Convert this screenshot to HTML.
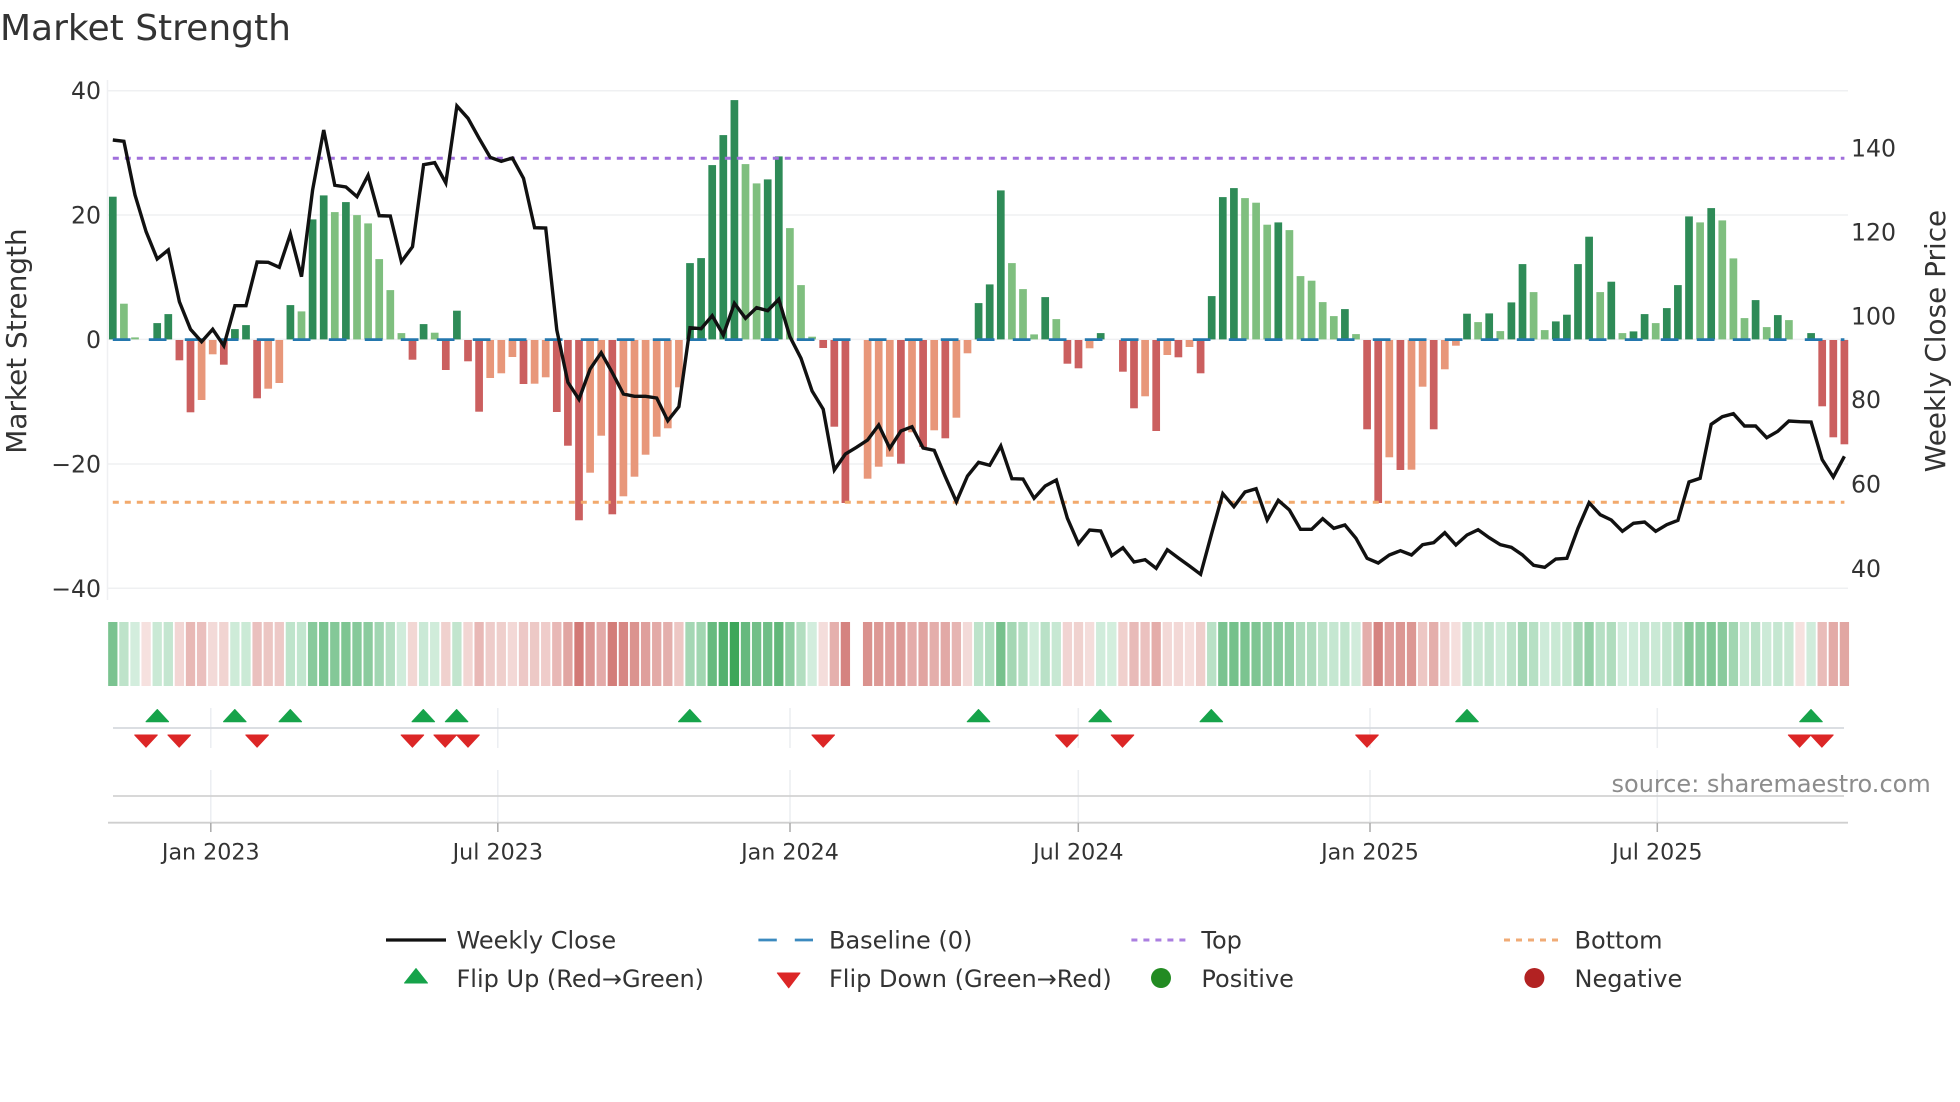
<!DOCTYPE html>
<html lang="en">
<head>
<meta charset="utf-8">
<title>Market Strength</title>
<style>
html,body{margin:0;padding:0;background:#fff;width:1960px;height:1102px;overflow:hidden}
svg{display:block}
text{font-family:"DejaVu Sans","Liberation Sans",sans-serif;fill:#333}
.t{font-size:22.2px}
.y{font-size:23.6px}
.l{font-size:24px}
</style>
</head>
<body>
<svg id="c" xmlns="http://www.w3.org/2000/svg" width="1960" height="1102" viewBox="0 0 1960 1102">
<rect width="1960" height="1102" fill="#fff"/>
<text x="0" y="40" font-size="36">Market Strength</text>

<!-- grid -->
<g stroke="#eff0f2" stroke-width="1.5" fill="none">
<path d="M107.5 80V600"/>
<path d="M108 90.7H1848M108 215H1848M108 339.4H1848M108 464H1848M108 588.3H1848"/>
</g>

<g id="bars"></g>
<path d="M112.8 339.6H1844.4" stroke="#2477ad" stroke-width="2.8" stroke-dasharray="17.7 18.3" fill="none"/>
<path d="M112.8 158.3H1844.4" stroke="#a06fdc" stroke-width="3" stroke-dasharray="6 6" fill="none"/>
<path d="M112.8 502.3H1844.4" stroke="#f2a96c" stroke-width="3" stroke-dasharray="6 6" fill="none"/>
<polyline id="price" fill="none" stroke="#111" stroke-width="3.4"/>

<!-- left axis -->
<g class="y" text-anchor="end">
<text x="101" y="99.2">40</text>
<text x="101" y="223.4">20</text>
<text x="101" y="347.9">0</text>
<text x="101" y="472.4">−20</text>
<text x="101" y="596.8">−40</text>
</g>
<!-- right axis -->
<g class="y">
<text x="1851" y="156.4">140</text>
<text x="1851" y="240.4">120</text>
<text x="1851" y="324.4">100</text>
<text x="1851" y="408.1">80</text>
<text x="1851" y="492.4">60</text>
<text x="1851" y="576.8">40</text>
</g>
<text transform="translate(26 341) rotate(-90)" text-anchor="middle" font-size="27.9">Market Strength</text>
<text transform="translate(1945 341) rotate(-90)" text-anchor="middle" font-size="27.9">Weekly Close Price</text>

<!-- heat strip -->
<g id="heat"></g>

<!-- event strip -->
<g stroke="#eceef1" stroke-width="1.5" fill="none">
<path d="M210.8 708V748M497.8 708V748M790 708V748M1078.3 708V748M1370 708V748M1657.3 708V748"/>
<path d="M210.8 770V822M497.8 770V822M790 770V822M1078.3 770V822M1370 770V822M1657.3 770V822"/>
</g>
<path d="M113 728H1844" stroke="#d6d9de" stroke-width="1.8" fill="none"/>
<path d="M113 796H1844" stroke="#d2d2d2" stroke-width="1.8" fill="none"/>
<path d="M108 822.7H1848" stroke="#cfcfcf" stroke-width="1.8" fill="none"/>
<path d="M210.8 823V832M497.8 823V832M790 823V832M1078.3 823V832M1370 823V832M1657.3 823V832" stroke="#aaa" stroke-width="1.5" fill="none"/>
<g id="mk"></g>

<g class="t" text-anchor="middle">
<text x="210.8" y="859.5">Jan 2023</text>
<text x="497.8" y="859.5">Jul 2023</text>
<text x="790" y="859.5">Jan 2024</text>
<text x="1078.3" y="859.5">Jul 2024</text>
<text x="1370" y="859.5">Jan 2025</text>
<text x="1657.3" y="859.5">Jul 2025</text>
</g>
<text x="1611.5" y="792" font-size="24" style="fill:#8c8c8c">source: sharemaestro.com</text>

<!-- legend -->
<path d="M386 940H446" stroke="#111" stroke-width="3.2" fill="none"/>
<path d="M758.4 940H776.8M794.8 940H813" stroke="#3c8abf" stroke-width="2.8" fill="none"/>
<path d="M1131.4 940H1186" stroke="#ab7fe0" stroke-width="3" stroke-dasharray="6 6" fill="none"/>
<path d="M1504 940H1558.5" stroke="#f0ab76" stroke-width="3" stroke-dasharray="6 6" fill="none"/>
<path d="M416 968.5L427.5 983H404.5Z" fill="#16a34a" stroke="#16a34a" stroke-width="1" stroke-linejoin="round"/>
<path d="M777.3 973H800L788.7 987.8Z" fill="#dc2626" stroke="#dc2626" stroke-width="1" stroke-linejoin="round"/>
<circle cx="1161" cy="978" r="10" fill="#228b22"/>
<circle cx="1534.4" cy="978" r="10" fill="#b22222"/>
<g class="l">
<text x="456.5" y="948.5">Weekly Close</text>
<text x="456.5" y="987">Flip Up (Red→Green)</text>
<text x="829" y="948.5">Baseline (0)</text>
<text x="829" y="987">Flip Down (Green→Red)</text>
<text x="1201.4" y="948.5">Top</text>
<text x="1201.4" y="987">Positive</text>
<text x="1574.5" y="948.5">Bottom</text>
<text x="1574.5" y="987">Negative</text>
</g>
</svg>
<script>
(function(){
var X0=112.8,P=11.1;
var b="142.7d 35.7l 2l -1l 16.3d 25.3d -20.3d -72.3d -60l -14.3l -24.7d 10.3d 14.3d -58.3d -48.7l -43l 34.3d 28l 120d 144d 127.3l 137.3d 124.3l 116l 80.3l 49.3l 6.3l -19.7d 15.3d 6.7l -30d 28.7d -21.3d -71.7d -38l -33.3l -17l -44d -43.7l -37.3l -72d -105.7d -180.3d -132.7l -95.7l -174.3d -156.3l -136.7l -114.7l -96.7l -88.3l -47.3l 76.3d 81.3d 174.3d 204.3d 239.3d 175.3l 156l 160d 183d 111.3l 54.3l 2.7l -8d -86.7d -163d x -138.7l -126.7l -116.7l -123.7d -92.3l -107d -90.3l -98.3d -77.7l -13.3l 36.3d 55d 149d 76.3l 50.3l 5l 42.3d 20.3l -23.7d -28.3d -8.3l 6.3d 1l -31.7d -68.3d -56.3l -91d -15l -17.3d -7l -33.3d 43.3d 142.3d 151.3d 141.3l 136.7l 114.7l 117d 109.3l 63.3l 58.7l 37.3l 23.3l 30.3d 5.3l -89.3d -163d -117.3l -130d -129.7l -46.7l -89.3d -29.3l -5.7l 25.7d 17.3l 26d 8.3l 37d 75.3d 47.3l 9.3l 18d 24.7d 75.3d 102.7d 47.3l 57.7d 6.3l 8d 25.3d 16.3l 31.3d 54.3d 123d 117l 131.3d 119l 81l 21.3l 39.3d 12.3l 24.3d 19.3l -1l 6.3d -66.3d -97.3d -104.3d".split(" ");
var y=[140,141.3,195,231.7,259,250,301.7,329.3,341.7,329.3,345.7,305.7,305.7,262,262.3,267.3,234,276.7,190,130,185.3,187,196.7,175.3,215.7,216,261.7,246.7,164.7,162.7,183,106,118.3,138.3,157.3,161.3,158,178.3,227.7,228,330,382.3,399.3,369,352.7,372.7,394,396.3,396.3,398,420.7,406.7,327.7,328.7,315.7,335,303.3,318.3,307.7,310.7,299.3,336.7,358.3,391,409.3,470,454,447.3,440,425,448.3,431,426.7,448,450.3,476.7,501.7,476,462.3,465.3,446,478.7,479,498.3,486,480,518.3,543.7,530,531,555.7,547.7,562,559.7,568.3,549.7,558,566,574.3,533.3,493.7,506.7,492,488.7,520,500.3,510,529.3,529.3,518.7,528.3,525,538.3,558.3,563,555,550.7,555,544.7,542.7,532.7,545,535,529.7,537.7,544.7,547.3,555,565.3,567.3,559,558.3,528.3,502.7,514.7,520,531.3,523.3,522,531.3,524.7,520.3,482,478.3,424.3,416.7,413.7,426,426,437.7,431.3,421,421.7,422,459.7,477,456.3];
var bars="",heat="";
for(var i=0;i<b.length;i++){
  if(b[i]==="x")continue;
  var h=parseFloat(b[i]),d=b[i].slice(-1)==="d",cx=X0+P*i,a=Math.abs(h),c;
  if(a>=1.5){
    if(h>0){c=d?"#2e8b57":"#7fbf7f";bars+='<rect x="'+(cx-3.85).toFixed(2)+'" y="'+(339.4-a).toFixed(2)+'" width="7.7" height="'+a.toFixed(2)+'" fill="'+c+'"/>';}
    else{c=d?"#cb5f5f":"#e8977a";bars+='<rect x="'+(cx-3.85).toFixed(2)+'" y="340" width="7.7" height="'+a.toFixed(2)+'" fill="'+c+'"/>';}
  }
  var r,g,bl;
  if(h>0){r=212-.63*a;g=238-.3*a;bl=222-.55*a;}
  else{r=246-.2*a;g=226-.58*a;bl=224-.59*a;}
  heat+='<rect x="'+(cx-4.65).toFixed(2)+'" y="622" width="9.3" height="64" fill="rgb('+Math.round(r)+','+Math.round(g)+','+Math.round(bl)+')"/>';
}
document.getElementById("bars").innerHTML=bars;
document.getElementById("heat").innerHTML=heat;
var pts=[];
for(var j=0;j<y.length;j++)pts.push((X0+P*j).toFixed(1)+","+y[j]);
document.getElementById("price").setAttribute("points",pts.join(" "));
var up=[157.3,234.8,290.3,423.3,456.6,689.8,978.5,1100.2,1211.3,1467,1811],dn=[146,179.2,257.1,412.4,445.2,468,823.2,1066.9,1122.5,1367,1799.6,1821.9],m="";
up.forEach(function(x){m+='<path d="M'+x+' 709.5L'+(x+11.3)+' 721.7H'+(x-11.3)+'Z" fill="#16a34a" stroke="#16a34a" stroke-width="1" stroke-linejoin="round"/>';});
dn.forEach(function(x){m+='<path d="M'+(x-11.3)+' 735H'+(x+11.3)+'L'+x+' 747.2Z" fill="#dc2626" stroke="#dc2626" stroke-width="1" stroke-linejoin="round"/>';});
document.getElementById("mk").innerHTML=m;
})();
</script>
</body>
</html>
